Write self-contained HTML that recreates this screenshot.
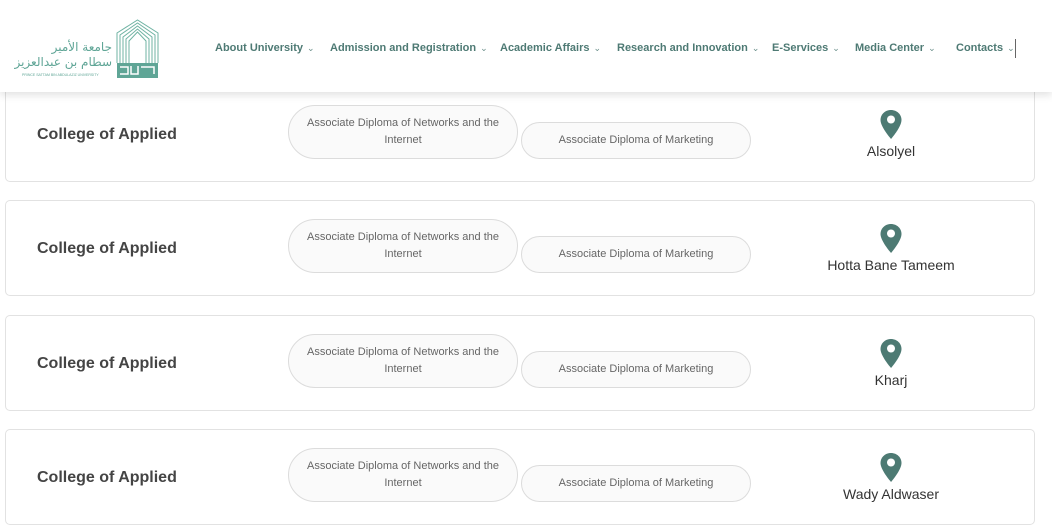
<!DOCTYPE html>
<html><head><meta charset="utf-8"><style>
*{margin:0;padding:0;box-sizing:border-box}
body{width:1052px;height:515px;overflow:hidden;background:#fff;font-family:"Liberation Sans","DejaVu Sans",sans-serif;position:relative}
.hdr{position:absolute;left:0;top:0;width:1052px;height:92px;background:#fff;box-shadow:0 3px 8px rgba(0,0,0,.12);z-index:5}
.nav{position:absolute;top:42px;font-size:11px;font-weight:bold;color:#4e7a74;white-space:nowrap}
.nav span{position:absolute;white-space:nowrap}
.nav i{font-style:normal;font-weight:normal;font-size:9px;margin-left:4px;color:#6a8f8a}
.card{position:absolute;left:5px;width:1030px;height:96px;border:1px solid #e2e2e2;border-radius:5px;background:#fff}
.ct{position:absolute;left:31px;font-size:16px;font-weight:bold;color:#444;line-height:20px}
.pill{position:absolute;border:1px solid #dcdcdc;border-radius:27px;background:#fafafa;font-size:11px;color:#666;text-align:center;display:flex;align-items:center;justify-content:center;line-height:17px}
.loc{position:absolute;left:786px;width:210px;text-align:center;font-size:14px;color:#333}
.pin{position:absolute;left:875px}
</style></head><body>
<div class="hdr">
 <div style="position:absolute;left:22px;top:40px;width:90px;font-family:'DejaVu Sans',sans-serif;color:#5fa596;direction:rtl;text-align:right;font-size:12px;line-height:15px;white-space:nowrap">جامعة الأمير<br>سطام بن عبدالعزيز</div>
 <div style="position:absolute;left:22px;top:73px;font-size:3.5px;color:#5fa596;white-space:nowrap">PRINCE SATTAM BIN ABDULAZIZ UNIVERSITY</div>
 <svg style="position:absolute;left:116px;top:19px" width="43" height="60" viewBox="0 0 43 60">
  <g fill="none" stroke="#6fb3a3" stroke-width="1">
   <path d="M1 44V14L21.5 1L42 14V44"/><path d="M4 44V16L21.5 4L39 16V44"/><path d="M7 44V18L21.5 7L36 18V44"/><path d="M10 44V20L21.5 10L33 20V44"/><path d="M13 44V22L21.5 13L30 22V44"/>
  </g>
  <rect x="1" y="44" width="41" height="15" fill="#5fa596"/>
  <path d="M4 48H12V55H4M15 47V55H22V47M25 48H38V55" stroke="#fff" stroke-width="1.5" fill="none"/>
 </svg>
 <div class="nav">
  <span style="left:215px">About University<i>⌄</i></span>
  <span style="left:330px">Admission and Registration<i>⌄</i></span>
  <span style="left:500px">Academic Affairs<i>⌄</i></span>
  <span style="left:617px">Research and Innovation<i>⌄</i></span>
  <span style="left:772px">E-Services<i>⌄</i></span>
  <span style="left:855px">Media Center<i>⌄</i></span>
  <span style="left:956px">Contacts<i>⌄</i></span>
 </div>
 <div style="position:absolute;left:1015px;top:39px;width:1px;height:19px;background:#666"></div>
</div>

<div class="card" style="top:86px"></div>
<div class="card" style="top:200px"></div>
<div class="card" style="top:315px"></div>
<div class="card" style="top:429px"></div>

<div id="c"></div>
<script>
var tops=[86,200,315,429],locs=["Alsolyel","Hotta Bane Tameem","Kharj","Wady Aldwaser"],h="";
tops.forEach(function(T,i){
h+='<div class="ct" style="top:'+(T+39)+'px;left:37px">College of Applied</div>';
h+='<div class="pill" style="left:288px;top:'+(T+19)+'px;width:230px;height:54px">Associate Diploma of Networks and the<br>Internet</div>';
h+='<div class="pill" style="left:521px;top:'+(T+36)+'px;width:230px;height:37px">Associate Diploma of Marketing</div>';
h+='<svg class="pin" style="top:'+(T+23)+'px" width="32" height="31" viewBox="0 0 32 31"><path d="M16 1C10 1 5.5 5.5 5.5 11C5.5 18 16 30 16 30C16 30 26.5 18 26.5 11C26.5 5.5 22 1 16 1Z" fill="#4d7a73"/><circle cx="16" cy="10.5" r="4" fill="#fff"/></svg>';
h+='<div class="loc" style="top:'+(T+57)+'px">'+locs[i]+'</div>';
});
document.getElementById('c').innerHTML=h;
</script>
</body></html>
